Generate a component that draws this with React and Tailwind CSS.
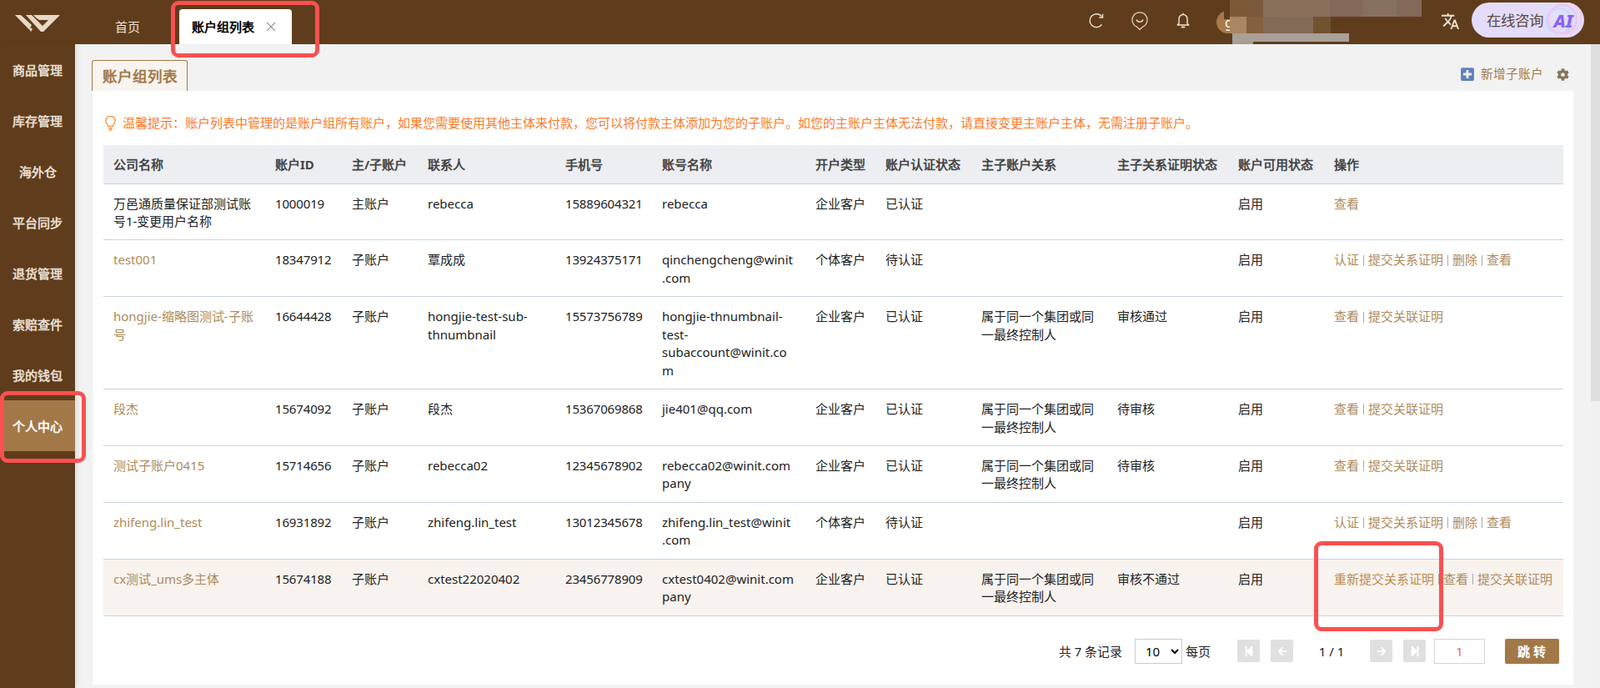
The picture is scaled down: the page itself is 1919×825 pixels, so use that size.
import React from "react";
import { MdTranslate } from "react-icons/md";
import { FaCog, FaPlusSquare, FaStepBackward, FaStepForward, FaArrowLeft, FaArrowRight } from "react-icons/fa";

const sideItems = ["商品管理", "库存管理", "海外仓", "平台同步", "退货管理", "索赔查件", "我的钱包", "个人中心"];

const columns = [
  ["公司名称", "w-[194px]"],
  ["账户ID", "w-[92px]"],
  ["主/子账户", "w-[91px]"],
  ["联系人", "w-[165px]"],
  ["手机号", "w-[116px]"],
  ["账号名称", "w-[184px]"],
  ["开户类型", "w-[84px]"],
  ["账户认证状态", "w-[115px]"],
  ["主子账户关系", "w-[163px]"],
  ["主子关系证明状态", "w-[145px]"],
  ["账户可用状态", "w-[115px]"],
  ["操作", "w-[287px]"],
];

const REL = "属于同一个集团或同一最终控制人";

const rows = [
  { name: "万邑通质量保证部测试账号1-变更用户名称", plain: true, id: "1000019", kind: "主账户", contact: "rebecca", phone: "15889604321", account: "rebecca", type: "企业客户", auth: "已认证", rel: "", proof: "", actions: ["查看"] },
  { name: "test001", id: "18347912", kind: "子账户", contact: "覃成成", phone: "13924375171", account: "qinchengcheng@winit.com", type: "个体客户", auth: "待认证", rel: "", proof: "", actions: ["认证", "提交关系证明", "删除", "查看"] },
  { name: "hongjie-缩略图测试-子账号", id: "16644428", kind: "子账户", contact: "hongjie-test-sub-thnumbnail", phone: "15573756789", account: "hongjie-thnumbnail-test-subaccount@winit.com", type: "企业客户", auth: "已认证", rel: REL, proof: "审核通过", actions: ["查看", "提交关联证明"] },
  { name: "段杰", id: "15674092", kind: "子账户", contact: "段杰", phone: "15367069868", account: "jie401@qq.com", type: "企业客户", auth: "已认证", rel: REL, proof: "待审核", actions: ["查看", "提交关联证明"] },
  { name: "测试子账户0415", id: "15714656", kind: "子账户", contact: "rebecca02", phone: "12345678902", account: "rebecca02@winit.company", type: "企业客户", auth: "已认证", rel: REL, proof: "待审核", actions: ["查看", "提交关联证明"] },
  { name: "zhifeng.lin_test", id: "16931892", kind: "子账户", contact: "zhifeng.lin_test", phone: "13012345678", account: <>zhifeng.lin_test@winit<wbr />.com</>, type: "个体客户", auth: "待认证", rel: "", proof: "", actions: ["认证", "提交关系证明", "删除", "查看"] },
  { name: "cx测试_ums多主体", id: "15674188", kind: "子账户", contact: "cxtest22020402", phone: "23456778909", account: "cxtest0402@winit.company", type: "企业客户", auth: "已认证", rel: REL, proof: "审核不通过", actions: ["重新提交关系证明", "查看", "提交关联证明"], hl: true },
];

function Logo() {
  return (
    <svg width="54" height="20" viewBox="0 0 54 20" fill="#e8d9c6">
      <path d="M0 0h7l13 12-3 5.500z" />
      <path d="M13 0h7l13 13 7-7H29l-4-3-3-3h32L34 20h-3z" fillRule="evenodd" />
      <path d="M17 17l2-2 2 2-2 3z" />
    </svg>
  );
}

function Refresh() {
  return (
    <svg width="20" height="20" viewBox="0 0 20 20" fill="none" stroke="#f0e4d6" strokeWidth="1.400">
      <path d="M16.500 14.500A8 8 0 1 1 16.200 4.500" />
      <path d="M17.500 1.800v4.200h-4.200" />
    </svg>
  );
}

function SmilePin() {
  return (
    <svg width="20" height="24" viewBox="0 0 20 24" fill="none" stroke="#e8d9c6" strokeWidth="1.200">
      <path d="M10 22.500l-3.500-3.400A9 9 0 1 1 13.500 19.100z" strokeLinejoin="round" />
      <path d="M6 10.500a4.300 4.300 0 0 0 8 0" strokeWidth="1.400" />
    </svg>
  );
}

function BellIcon() {
  return (
    <svg width="16" height="20" viewBox="0 0 16 20" fill="none" stroke="#f3e7d8" strokeWidth="1.400">
      <path d="M3 13V7.500a5 5 0 0 1 10 0V13l1.800 2H1.200z" strokeLinejoin="round" />
      <path d="M8 .8v1.700" />
      <path d="M5.800 17.500h4.400" strokeWidth="1.800" />
    </svg>
  );
}

function AiBadge() {
  return (
    <div className="relative ml-[2px] w-[44px] h-[42px] flex items-center justify-center">
      <svg className="absolute inset-0" width="44" height="42" viewBox="0 0 44 42" fill="none">
        <circle cx="17" cy="22" r="15" stroke="#bfdcf8" strokeWidth="2" />
        <circle cx="21" cy="20" r="17" stroke="#f0c3ef" strokeWidth="2" />
        <circle cx="24" cy="19" r="19" stroke="#f3cdf1" strokeWidth="1.500" />
      </svg>
      <span className="relative italic font-extrabold text-[22px] text-[#8b62f3] font-['Inter',sans-serif]">AI</span>
    </div>
  );
}

function Mosaic() {
  return (
    <div className="absolute left-[1475px] top-0 w-[230px]">
      <div className="absolute -left-[7px] top-0 w-[7px] h-[23px] bg-[#5f3d1c]" />
      <div className="flex h-[20px]">
        <div className="w-[20px] bg-[#7d5a36]" />
        <div className="w-[20px] bg-[#7a5a3c]" />
        <div className="w-[20px] bg-[#89705b]" />
        <div className="w-[60px] bg-[#8a6f5a]" />
        <div className="w-[40px] bg-[#84695a]" />
        <div className="w-[40px] bg-[#867060]" />
        <div className="w-[30px] bg-[#84695a]" />
      </div>
      <div className="flex h-[20px]">
        <div className="w-[20px] bg-[#a98763]" />
        <div className="w-[20px] bg-[#85603e]" />
        <div className="w-[60px] bg-[#826a57]" />
        <div className="w-[21px] bg-[#70522f]" />
      </div>
      <div className="h-[10px] w-[140px] ml-[3px] bg-[#aaa098]" />
      <div className="h-[3px] w-[25px] ml-[3px] bg-[#a89c96]" />
    </div>
  );
}

function RedBox({ className }) {
  return <div className={"absolute border-[5px] border-[#fb5050] rounded-[9px] pointer-events-none " + className} />;
}

function PageBtn({ children, className }) {
  return <div className={"w-[27px] h-[27px] rounded-[2px] bg-[#e0e0e0] flex items-center justify-center text-white " + className}>{children}</div>;
}

function Actions({ list, hl }) {
  return (
    <div className="flex items-center whitespace-nowrap">
      {list.map((a, i) => (
        <React.Fragment key={a}>
          {i > 0 && <span className="w-px h-[13px] mx-[5px] bg-[#aaa]" />}
          <span className={hl && i === 0 ? "text-[#bf8a4c]" : "text-[#ae8a5c]"}>{a}</span>
        </React.Fragment>
      ))}
    </div>
  );
}

export default function App() {
  return (
    <div lang="zh-CN" className="relative w-[1919px] h-[825px] overflow-hidden flex flex-col text-[15px] text-[#222] font-['Noto_Sans_CJK_SC','Noto_Sans',sans-serif]">
      <header className="h-[53px] shrink-0 bg-[#5f3d1c] flex items-stretch">
        <div className="w-[90px] flex items-start pt-[18px] pl-[18px]">
          <Logo />
        </div>
        <div className="w-[125px] flex items-center pl-[48px] pt-[11px] text-[#f0e4d6]">首页</div>
        <div className="mt-[11px] w-[135px] bg-white rounded-t-[4px] flex items-center pl-[15px] font-bold text-black">
          账户组列表
          <svg className="ml-[14px]" width="12" height="12" viewBox="0 0 12 12" stroke="#999" strokeWidth="1.200">
            <path d="M1 1l10 10M11 1L1 11" />
          </svg>
        </div>
        <div className="flex-1 flex items-center pl-[955px] pb-[3px]">
          <div className="w-[20px] mr-[32px]"><Refresh /></div>
          <div className="w-[20px] mr-[34px]"><SmilePin /></div>
          <div className="w-[16px]"><BellIcon /></div>
          <div className="ml-[32px] mt-[3px] w-[36px] h-[27px] rounded-full bg-[#a87a4a] text-white text-[16px] flex items-center pl-[10px]">g</div>
          <div className="ml-[233px] text-[#f0e4d6]"><MdTranslate size={23} /></div>
          <div className="ml-[14px] mb-[2px] w-[135px] h-[42px] rounded-full bg-[#e3dcfb] flex items-center pl-[18px] text-[17.500px] text-[#5b4a3c]">
            在线咨询
            <AiBadge />
          </div>
        </div>
      </header>

      <div className="flex-1 flex min-h-0">
        <aside className="w-[90px] shrink-0 bg-[#5f3d1c] relative z-10 shadow-[3px_0_6px_rgba(0,0,0,0.08)]">
          {sideItems.map((s) => (
            <div
              key={s}
              className={
                s === "个人中心"
                  ? "h-[61px] pt-px flex items-center justify-center bg-[#a37848] text-white font-bold"
                  : "h-[61px] pt-px flex items-center justify-center text-[#eadfd2] font-bold"
              }
            >
              {s}
            </div>
          ))}
        </aside>

        <main className="flex-1 bg-[#f2f2f2] pl-[21px] pr-[21px] min-w-0">
          <div className="h-[56px] flex items-end justify-between">
            <div className="-ml-px w-[115px] h-[37px] bg-[#f8f4f0] border border-b-0 border-[#a37848] rounded-t-[3px] flex items-center justify-center text-[17.600px] text-[#a37848] font-bold">
              账户组列表
            </div>
            <div className="flex items-center h-[40px] text-[#a37848] text-[14.600px]">
              <FaPlusSquare size={18} className="text-[#5d82b8]" />
              <span className="ml-[7px]">新增子账户</span>
              <FaCog size={15} className="ml-[16px] mr-[5px] text-[#857658]" />
            </div>
          </div>

          <section className="h-[712px] bg-white pl-[13px] pr-[12px] pt-[28px]">
            <div className="h-[37px] flex items-start pl-[2px] text-[#f97b2c]">
              <svg className="mt-[2px]" width="13" height="18" viewBox="0 0 13 18" fill="none" stroke="#f9913f" strokeWidth="1.300">
                <path d="M3.800 12.500c0-2-3-3.500-3-6.500a5.700 5.700 0 0 1 11.400 0c0 3-3 4.500-3 6.500z" />
                <path d="M4.200 15h4.600M5 17h3" strokeWidth="1.600" />
              </svg>
              <span className="ml-[8px] leading-[21px] whitespace-nowrap">
                温馨提示：账户列表中管理的是账户组所有账户，如果您需要使用其他主体来付款，您可以将付款主体添加为您的子账户。如您的主账户主体无法付款，请直接变更主账户主体，无需注册子账户。
              </span>
            </div>

            <table className="w-[1751px] table-fixed border-collapse">
              <thead>
                <tr className="h-[46px] bg-[#edeef2]">
                  {columns.map(([c, w]) => (
                    <th key={c} className={w + " px-[12px] text-left font-bold text-[15px] text-[#444] whitespace-nowrap border-b border-[#c5d3e6]"}>
                      {c}
                    </th>
                  ))}
                </tr>
              </thead>
              <tbody>
                {rows.map((r) => (
                  <tr key={r.id} className={r.hl ? "bg-[#f8f3ef]" : ""}>
                    <td className={"pl-[12px] pr-[10px] pt-[13px] pb-[11px] align-top leading-[21.450px] break-words border-b border-[#c5d3e6] " + (r.plain ? "" : "text-[#ae8a5c]")}>{r.name}</td>
                    <td className="pl-[12px] pt-[13px] pb-[11px] align-top leading-[21.450px] tracking-[-0.15px] border-b border-[#c5d3e6]">{r.id}</td>
                    <td className="pl-[12px] pt-[13px] pb-[11px] align-top leading-[21.450px] border-b border-[#c5d3e6]">{r.kind}</td>
                    <td className="pl-[12px] pr-[12px] pt-[13px] pb-[11px] align-top leading-[21.450px] break-words border-b border-[#c5d3e6]">{r.contact}</td>
                    <td className="pl-[12px] pt-[13px] pb-[11px] align-top leading-[21.450px] tracking-[-0.15px] border-b border-[#c5d3e6]">{r.phone}</td>
                    <td className="pl-[12px] pr-[12px] pt-[13px] pb-[11px] align-top leading-[21.450px] break-words border-b border-[#c5d3e6]">{r.account}</td>
                    <td className="pl-[12px] pt-[13px] pb-[11px] align-top leading-[21.450px] border-b border-[#c5d3e6]">{r.type}</td>
                    <td className="pl-[12px] pt-[13px] pb-[11px] align-top leading-[21.450px] border-b border-[#c5d3e6]">{r.auth}</td>
                    <td className="pl-[12px] pr-[12px] pt-[13px] pb-[11px] align-top leading-[21.450px] border-b border-[#c5d3e6]">{r.rel}</td>
                    <td className="pl-[12px] pt-[13px] pb-[11px] align-top leading-[21.450px] border-b border-[#c5d3e6]">{r.proof}</td>
                    <td className="pl-[12px] pt-[13px] pb-[11px] align-top leading-[21.450px] border-b border-[#c5d3e6]">启用</td>
                    <td className="pl-[12px] pt-[13px] pb-[11px] align-top leading-[21.450px] border-b border-[#c5d3e6]">
                      <Actions list={r.actions} hl={r.hl} />
                    </td>
                  </tr>
                ))}
              </tbody>
            </table>

            <div className="mt-[27px] flex items-center justify-end pr-[5px] text-[14.800px] text-[#222]">
              <span>共 7 条记录</span>
              <select defaultValue="10" className="ml-[15px] w-[57px] h-[30px] pl-[8px] border border-[#ccc] bg-white text-[15px] text-black">
                <option>10</option>
                <option>20</option>
                <option>50</option>
              </select>
              <span className="ml-[4px] text-[15px]">每页</span>
              <PageBtn className="ml-[32px]"><FaStepBackward size={14} /></PageBtn>
              <PageBtn className="ml-[13px]"><FaArrowLeft size={12} /></PageBtn>
              <span className="w-[92px] text-center text-[15px]">1 / 1</span>
              <PageBtn><FaArrowRight size={12} /></PageBtn>
              <PageBtn className="ml-[13px]"><FaStepForward size={14} /></PageBtn>
              <div className="ml-[10px] w-[61px] h-[30px] border border-[#d5d5d5] flex items-center justify-center text-[#f2604c]">1</div>
              <div className="ml-[24px] w-[65px] h-[30px] pl-[3px] rounded-[2px] bg-[#a37848] text-white text-[15px] font-bold flex items-center justify-center tracking-[4px]">跳转</div>
            </div>
          </section>
        </main>

        <div className="w-[11px] shrink-0 bg-[#f1f1f1]">
          <div className="h-[428px] bg-[#dedede]" />
        </div>
      </div>

      <Mosaic />
      <RedBox className="left-[205px] top-[1px] w-[178px] h-[68px] z-20" />
      <RedBox className="left-0 top-[469px] w-[103px] h-[86px] z-20" />
      <RedBox className="left-[1576px] top-[649px] w-[155px] h-[108px] z-20" />
    </div>
  );
}
